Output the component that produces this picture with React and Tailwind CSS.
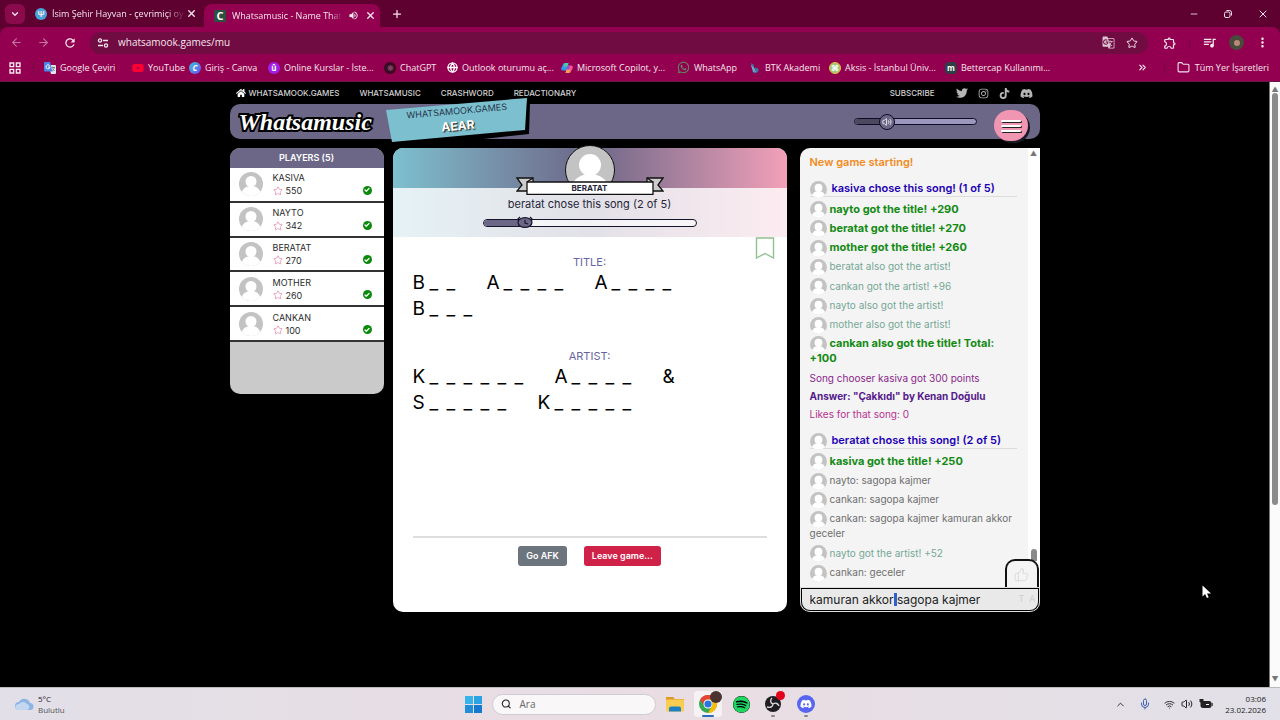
import React, { useState } from "react";
import { FaTwitter, FaInstagram, FaTiktok, FaDiscord, FaHome, FaYoutube, FaWhatsapp, FaSpotify } from "react-icons/fa";
import { MdGTranslate, MdOutlineExtension, MdQueueMusic, MdMoreVert, MdVolumeUp, MdRefresh } from "react-icons/md";
import {
  ArrowLeft,
  ArrowRight,
  Check,
  ChevronDown,
  ChevronUp,
  ChevronsRight,
  Folder,
  Globe,
  Mic,
  Minus,
  Plus,
  Search,
  Star,
  ThumbsUp,
  Volume2,
  Wifi,
  X,
} from "lucide-react";

const bookmarks = [
  { label: "Google Çeviri", width: "w-[88px]", icon: <TranslateIcon /> },
  { label: "YouTube", width: "w-[57px]", icon: <FaYoutube className="size-3 text-[#ff0033]" /> },
  { label: "Giriş - Canva", width: "w-[79px]", icon: <Disc className="bg-linear-to-br from-[#12c4d3] to-[#6a3df0] text-white italic">C</Disc> },
  { label: "Online Kurslar - İste...", width: "w-[116px]", icon: <Disc className="bg-[#a020e8] text-white">û</Disc> },
  { label: "ChatGPT", width: "w-[63px]", icon: <Disc className="bg-[#3a0a22] text-[#7a4460]">❋</Disc> },
  { label: "Outlook oturumu aç...", width: "w-[114px]", icon: <Globe className="size-[11px] rounded-full bg-[#92004f] text-white" strokeWidth={3} /> },
  { label: "Microsoft Copilot, y...", width: "w-[116px]", icon: <CopilotIcon /> },
  { label: "WhatsApp", width: "w-[72px]", icon: <FaWhatsapp className="size-[13px] text-[#5f8f62]" /> },
  { label: "BTK Akademi", width: "w-[80px]", icon: <BtkIcon /> },
  { label: "Aksis - İstanbul Üniv...", width: "w-[116px]", icon: <Disc className="border border-[#e8c33b] bg-[#9dc77a] text-white">⌘</Disc> },
  { label: "Bettercap Kullanımı...", width: "w-[120px]", icon: <Disc className="rounded-sm bg-[#2e4043] text-white">m</Disc> },
];

const players = [
  { name: "KASIVA", score: 550 },
  { name: "NAYTO", score: 342 },
  { name: "BERATAT", score: 270 },
  { name: "MOTHER", score: 260 },
  { name: "CANKAN", score: 100 },
];

const messages = [
  { kind: "start", text: "New game starting!" },
  { kind: "round", text: "kasiva chose this song! (1 of 5)" },
  { kind: "title", text: "nayto got the title! +290" },
  { kind: "title", text: "beratat got the title! +270" },
  { kind: "title", text: "mother got the title! +260" },
  { kind: "artist", text: "beratat also got the artist!" },
  { kind: "artist", text: "cankan got the artist! +96" },
  { kind: "artist", text: "nayto also got the artist!" },
  { kind: "artist", text: "mother also got the artist!" },
  { kind: "title", text: "cankan also got the title! Total: +100" },
  { kind: "points", text: "Song chooser kasiva got 300 points" },
  { kind: "answer", text: 'Answer: "Çakkıdı" by Kenan Doğulu' },
  { kind: "likes", text: "Likes for that song: 0" },
  { kind: "round", text: "beratat chose this song! (2 of 5)" },
  { kind: "title", text: "kasiva got the title! +250" },
  { kind: "chat", text: "nayto: sagopa kajmer" },
  { kind: "chat", text: "cankan: sagopa kajmer" },
  { kind: "chat", text: "cankan: sagopa kajmer kamuran akkor geceler" },
  { kind: "artist", text: "nayto got the artist! +52" },
  { kind: "chat", text: "cankan: geceler" },
];

const messageStyles = {
  start: "text-[11px] leading-[14px] font-semibold text-[#f28a1c]",
  round: "mt-2 border-b border-[#dcdcdc] text-[11px] leading-[15px] font-semibold whitespace-nowrap text-[#1c00b4]",
  title: "text-[11px] leading-[15px] font-bold text-[#138a13]",
  artist: "text-[10px] leading-[15px] text-[#76a796]",
  points: "text-[10px] leading-[14px] text-[#8a1f8a]",
  answer: "text-[10px] leading-[14px] font-bold text-[#551a8b]",
  likes: "text-[10px] leading-[14px] text-[#b8318f]",
  chat: "text-[10px] leading-[15px] text-[#6e6e6e]",
};

const withAvatar = ["round", "title", "artist", "chat"];

function Disc({ className, children }) {
  return (
    <span className={`flex size-3 shrink-0 items-center justify-center rounded-full text-[8px] leading-none font-bold ${className}`}>
      {children}
    </span>
  );
}

function TranslateIcon() {
  return (
    <svg viewBox="0 0 24 24" className="size-3 shrink-0">
      <path d="M9 6h13a2 2 0 0 1 2 2v14a2 2 0 0 1-2 2h-8z" fill="#e3e6ea" />
      <path d="M2 0h10l5 19H2a2 2 0 0 1-2-2V2a2 2 0 0 1 2-2z" fill="#4a86e8" />
      <path d="M11 7a4 4 0 1 0 1 3H8" fill="none" stroke="#fff" strokeWidth="2" />
      <path d="M15 11h7M18 9v2M21 11c-1 4-3 5-5 7M17 13l4 5" fill="none" stroke="#5f6b78" strokeWidth="1.5" />
    </svg>
  );
}

function CopilotIcon() {
  return (
    <svg viewBox="0 0 24 24" className="size-3 shrink-0">
      <path d="M8 2h7l-4 15H4c-4 0-4-3-3-6l3-6c1-2 2-3 4-3z" fill="#2c9be8" />
      <path d="M8 2h7l-2 7H5z" fill="#4ad0a0" />
      <path d="M16 22H9l4-15h7c4 0 4 3 3 6l-3 6c-1 2-2 3-4 3z" fill="#f0558f" />
      <path d="M16 22H9l2-7h8z" fill="#f8a54a" />
      <path d="M13 7h5l-2 8h-5z" fill="#a04bd8" />
    </svg>
  );
}

function BtkIcon() {
  return (
    <svg viewBox="0 0 24 24" className="size-3 shrink-0">
      <path d="M4 2l6 4v6c6-2 11 1 9 6-2 5-10 6-12 1z" fill="#3d6f9f" />
      <path d="M8 10l5 10M5 7l5 13" stroke="#9fc4de" strokeWidth="1.5" />
    </svg>
  );
}

function Avatar({ className }) {
  return (
    <svg viewBox="0 0 24 24" className={`rounded-full bg-[#c3c3c3] ${className}`}>
      <circle cx="12" cy="9.5" r="5.5" fill="#fff" />
      <path d="M2 24c0-6 4-10 10-10s10 4 10 10z" fill="#fff" />
    </svg>
  );
}

function Browser() {
  return (
    <header className="shrink-0 bg-[#5e0030] font-['Open_Sans',sans-serif] text-[9px] text-[#f5e6ee]">
      <div className="flex h-[27px] items-center">
        <button aria-label="Search tabs" className="ml-[5px] flex size-5 items-center justify-center rounded-md bg-[#8a0a4c]">
          <ChevronDown className="size-[10px]" strokeWidth={3} />
        </button>
        <div className="ml-[10px] flex w-[169px] items-center">
          <span className="flex size-3 shrink-0 items-center justify-center rounded-full bg-[#4aa3d8] text-[8px] font-bold">Ψ</span>
          <span className="ml-[5px] w-[134px] shrink-0 whitespace-nowrap mask-r-from-85%">İsim Şehir Hayvan - çevrimiçi oy</span>
          <button aria-label="Close tab" className="shrink-0">
            <X className="size-[11px]" strokeWidth={3} />
          </button>
        </div>
        <div className="mt-1 flex h-[23px] w-[176px] items-center gap-[6px] rounded-t-lg bg-[#92004f] px-[10px]">
          <span className="flex size-3 shrink-0 items-center justify-center bg-[#2f4f43] text-[11px] leading-none font-bold text-white">C</span>
          <span className="flex-1 whitespace-nowrap mask-r-from-90%">Whatsamusic - Name That</span>
          <MdVolumeUp className="size-[11px] shrink-0" />
          <button aria-label="Close tab">
            <X className="size-[11px]" strokeWidth={3} />
          </button>
        </div>
        <button aria-label="New tab" className="ml-[11px]">
          <Plus className="size-3" strokeWidth={2.5} />
        </button>
        <div className="mr-[11px] ml-auto flex items-center gap-6">
          <button aria-label="Minimize">
            <Minus className="size-[10px]" />
          </button>
          <button aria-label="Restore">
            <svg viewBox="0 0 10 10" className="size-[10px]" fill="none" stroke="currentColor">
              <rect x="1.5" y="3" width="5.5" height="5.5" rx="1.5" />
              <path d="M3.5 1.5h3a2 2 0 0 1 2 2v3" />
            </svg>
          </button>
          <button aria-label="Close">
            <X className="size-3" strokeWidth={2} />
          </button>
        </div>
      </div>

      <div className="h-[55px] rounded-t-lg border-b border-[#6b1745] bg-[#92004f]">
        <div className="flex h-[31px] items-center px-[10px]">
          <ArrowLeft className="size-[13px] text-[#c4749f]" />
          <ArrowRight className="ml-[14px] size-[13px] text-[#c4749f]" />
          <MdRefresh className="ml-[13px] size-[14px]" />
          <div className="ml-[13px] flex h-[22px] flex-1 items-center rounded-full bg-[#700c42] pr-[10px] pl-[6px]">
            <svg viewBox="0 0 14 14" className="size-[14px] rounded-full" fill="none" stroke="currentColor" strokeWidth="1.3">
              <circle cx="4" cy="4.5" r="1.6" />
              <path d="M7 4.5h5M2 9.5h5" />
              <circle cx="10" cy="9.5" r="1.6" />
            </svg>
            <input aria-label="Address" readOnly value="whatsamook.games/mu" className="ml-2 min-w-0 flex-1 bg-transparent text-[10px] outline-none" />
            <MdGTranslate className="size-[13px] text-[#dcc3d0]" />
            <Star className="ml-[11px] size-3" />
          </div>
          <MdOutlineExtension className="ml-[15px] size-[14px]" />
          <span className="mx-3 h-3 w-px bg-[#700c42]" />
          <MdQueueMusic className="size-[15px]" />
          <span className="ml-3 flex size-[15px] items-center justify-center overflow-hidden rounded-full bg-[#4a4a3c]">
            <span className="size-[6px] rounded-full bg-[#b98a76]" />
          </span>
          <MdMoreVert className="ml-[11px] size-[15px]" />
        </div>
        <nav className="flex h-[19px] items-center pr-[11px] pl-[9px] text-[9px]">
          <svg viewBox="0 0 12 12" className="size-3" fill="none" stroke="currentColor" strokeWidth="1.4">
            <path d="M1 1h3.6v3.6H1zM7.4 1H11v3.6H7.4zM1 7.4h3.6V11H1zM7.4 7.4H11V11H7.4z" />
          </svg>
          <span className="mr-[10px] ml-3 h-3 w-px bg-[#700c42]" />
          {bookmarks.map((b) => (
            <a key={b.label} href="#" className={`flex shrink-0 items-center gap-1 whitespace-nowrap ${b.width}`}>
              {b.icon}
              <span>{b.label}</span>
            </a>
          ))}
          <ChevronsRight className="ml-auto size-[11px]" strokeWidth={2.5} />
          <span className="ml-4 mr-3 h-3 w-px bg-[#700c42]" />
          <a href="#" className="flex items-center gap-[5px]">
            <Folder className="size-[13px]" />
            Tüm Yer İşaretleri
          </a>
        </nav>
      </div>
    </header>
  );
}

function TopNav() {
  return (
    <nav className="flex h-[22px] items-center text-[8px] font-medium text-[#d2d2d2]">
      <a href="#" className="ml-[6px] flex items-center gap-[3px]">
        <FaHome className="size-[10px] text-white" />
        WHATSAMOOK.GAMES
      </a>
      <a href="#" className="ml-5">WHATSAMUSIC</a>
      <a href="#" className="ml-5">CRASHWORD</a>
      <a href="#" className="ml-5">REDACTIONARY</a>
      <a href="#" className="ml-auto">SUBSCRIBE</a>
      <div className="mr-[7px] ml-[21px] flex items-center gap-[10px] text-[#b5b5b5]">
        <a href="#" aria-label="Twitter"><FaTwitter className="size-3" /></a>
        <a href="#" aria-label="Instagram"><FaInstagram className="size-[11px]" /></a>
        <a href="#" aria-label="TikTok"><FaTiktok className="size-[11px]" /></a>
        <a href="#" aria-label="Discord"><FaDiscord className="size-[13px]" /></a>
      </div>
    </nav>
  );
}

function GameHeader() {
  const [volume, setVolume] = useState(27);

  return (
    <div className="relative flex h-[35px] items-center rounded-[10px] bg-[#6c6787] px-[9px]">
      <h1 className="font-[cursive] text-[24px] leading-none font-bold text-white italic [paint-order:stroke_fill] [-webkit-text-stroke:4px_#000]">
        Whatsamusic
      </h1>

      <div className="absolute -top-[7px] left-[156px] h-[46px] w-[146px]">
        <svg viewBox="0 0 146 46" className="absolute inset-0">
          <path d="M10 14L144 6L143 37L62 46L10 40z" fill="#000" />
          <path d="M0 13L141 1L139 33L6 45z" fill="#7cc0cf" />
        </svg>
        <div className="relative flex -rotate-5 flex-col items-center gap-1 pt-[9px] pr-1">
          <span className="text-[9px] leading-[10px] text-[#26334a]">WHATSAMOOK.GAMES</span>
          <span className="text-[12px] leading-[12px] font-bold text-white [text-shadow:1px_1px_1px_#222]">AEAR</span>
        </div>
      </div>

      <div className="relative mr-[17px] ml-auto flex h-4 w-[123px] items-center">
        <div className="h-[7px] w-full overflow-hidden rounded-full border-[1.5px] border-[#0d0c24] bg-[#9b97bd]">
          <div className="h-full bg-[#4c4860]" style={{ width: `${volume}%` }} />
        </div>
        <span
          className="absolute flex size-4 -translate-x-1/2 items-center justify-center rounded-full border-[1.5px] border-[#0d0c24] bg-[#6c6787] text-white"
          style={{ left: `${volume}%` }}
        >
          <Volume2 className="size-[10px]" />
        </span>
        <input
          type="range"
          aria-label="Volume"
          value={volume}
          onChange={(e) => setVolume(Number(e.target.value))}
          className="absolute inset-0 w-full opacity-0"
        />
      </div>
      <button
        aria-label="Menu"
        className="relative top-1 mr-[3px] flex h-[31px] w-[34px] flex-col items-center justify-center gap-[3px] rounded-full bg-[#f095b2] shadow-[2px_2px_0_#1a1a24]"
      >
        <span className="h-[2px] w-5 rounded-full bg-white shadow-[1px_1px_0_#222]" />
        <span className="h-[2px] w-5 rounded-full bg-white shadow-[1px_1px_0_#222]" />
        <span className="h-[2px] w-5 rounded-full bg-white shadow-[1px_1px_0_#222]" />
      </button>
    </div>
  );
}

function Players() {
  return (
    <section className="h-[246px] overflow-hidden rounded-[10px] bg-[#cacaca]">
      <h2 className="flex h-5 items-center justify-center bg-[#6c6787] text-[9px] font-semibold text-white">PLAYERS (5)</h2>
      <ul className="grid h-[174px] auto-rows-fr">
        {players.map((p) => (
          <li key={p.name} className="flex items-center border-b-2 border-[#333] bg-white pr-3 pl-[9px]">
            <Avatar className="size-6" />
            <div className="ml-[10px] text-[9px] leading-[13px] text-[#2b2b2b]">
              <div>{p.name}</div>
              <div className="flex items-center gap-[3px]">
                <Star className="size-[10px] text-[#e0709a]" strokeWidth={1.5} />
                {p.score}
              </div>
            </div>
            <span className="mt-3 ml-auto flex size-[9px] items-center justify-center rounded-full bg-[#0a8a0a] text-white">
              <Check className="size-[6px]" strokeWidth={5} />
            </span>
          </li>
        ))}
      </ul>
    </section>
  );
}

function Blanks({ words }) {
  return (
    <div className="flex flex-wrap gap-x-[23px] text-[19px] leading-[26px] text-black">
      {words.map((word, i) => (
        <span key={i} className="flex">
          {word.split("").map((ch, j) => (
            <span key={j} className="w-[17px]">{ch}</span>
          ))}
        </span>
      ))}
    </div>
  );
}

function Ribbon() {
  return (
    <div className="relative h-[18px] w-[148px]">
      <svg viewBox="0 0 148 18" className="absolute inset-0" stroke="#111" strokeWidth="1.3">
        <path d="M1 1h16v13H1l5-6z" fill="#ccc" />
        <path d="M147 1h-16v13h16l-5-6z" fill="#ccc" />
        <path d="M11 5l6-4M137 5l-6-4" />
        <path d="M11 5h126v12.3H11z" fill="#fff" />
      </svg>
      <span className="absolute inset-x-0 top-[5px] text-center text-[8px] leading-[12px] font-bold">BERATAT</span>
    </div>
  );
}

function Board() {
  return (
    <section className="flex flex-col rounded-[10px] bg-white">
      <div className="rounded-t-[10px] bg-linear-to-r from-[#7cc0cf] via-[#6c6787] to-[#f3a0b8]">
        <div className="h-10" />
        <div className="h-[49px] bg-white/80" />
      </div>
      <div className="-mt-[92px] flex h-[92px] flex-col items-center text-[#262638]">
        <Avatar className="size-[50px] shrink-0 border-[1.5px] border-[#111]" />
        <div className="-mt-[18px]">
          <Ribbon />
        </div>
        <p className="mt-[2px] text-[11px] leading-[14px]">beratat chose this song (2 of 5)</p>
        <div className="relative mt-2 h-2 w-[214px] shrink-0 rounded-full border-[1.5px] border-[#15152c] bg-white/60">
          <div className="h-full w-[41px] rounded-l-full bg-[#6c6787]" />
          <svg viewBox="0 0 18 12" className="absolute -top-[4px] left-8 h-3 w-[18px]" stroke="#15152c" strokeWidth="1.2" fill="#6c6787">
            <ellipse cx="9" cy="6.5" rx="7" ry="4.8" />
            <path d="M1 4l3-3M17 4l-3-3M9 4v3l3 1" fill="none" />
          </svg>
        </div>
      </div>

      <div className="flex flex-1 flex-col px-5">
        <button aria-label="Bookmark this song" className="-mr-2 self-end">
          <svg viewBox="0 0 20 22" className="h-[22px] w-5" fill="none" stroke="#8fc08f" strokeWidth="1.4">
            <path d="M1.5 1h17v20L10 16.500l-8.500 4.500z" />
          </svg>
        </button>
        <h3 className="-mt-[5px] text-center text-[11px] leading-4 text-[#6863a0]">TITLE:</h3>
        <Blanks words={["B__", "A____", "A____", "B___"]} />
        <h3 className="mt-[26px] text-center text-[11px] leading-4 text-[#6863a0]">ARTIST:</h3>
        <Blanks words={["K______", "A____", "&", "S_____", "K_____"]} />
        <hr className="mt-auto border-t-2 border-[#dedede]" />
        <div className="mt-2 mb-[46px] flex justify-center gap-[17px] text-[9px] font-semibold text-white">
          <button className="h-5 rounded-[3px] bg-[#6c757d] px-2">Go AFK</button>
          <button className="h-5 rounded-[3px] bg-[#d02148] px-2">Leave game...</button>
        </div>
      </div>
    </section>
  );
}

function Chat() {
  const [draft, setDraft] = useState("kamuran akkor sagopa kajmer");

  return (
    <section className="relative flex flex-col overflow-hidden rounded-[10px] rounded-tr-none bg-[#f4f4f4]">
      <div className="flex flex-1">
        <ul className="flex flex-1 flex-col justify-between pt-[7px] pr-[11px] pb-[7px] pl-[10px]">
          {messages.map((m, i) => (
            <li key={i} className={messageStyles[m.kind]}>
              {withAvatar.includes(m.kind) && (
                <Avatar className={`-my-1 inline-block size-[17px] align-middle ${m.kind === "round" ? "mr-[5px]" : "mr-[3px]"}`} />
              )}
              {m.text}
            </li>
          ))}
        </ul>
        <div className="flex w-3 flex-col items-center bg-white">
          <span className="mt-[2px] text-[7px] leading-none text-[#777]">▲</span>
          <span className="mt-auto mb-[26px] h-3 w-[6px] rounded-t-full bg-[#8a8a8a]" />
        </div>
      </div>

      <button
        aria-label="Like this song"
        className="absolute right-[1px] bottom-[25px] flex h-7 w-[34px] items-center justify-center rounded-t-[10px] border-2 border-b-0 border-[#111] bg-[#f4f4f4] text-[#d6d6d6]"
      >
        <ThumbsUp className="size-[15px]" strokeWidth={1.3} />
      </button>

      <form onSubmit={(e) => e.preventDefault()} className="relative h-[25px] rounded-b-[10px] border border-[#ddd] bg-black p-px">
        <input
          aria-label="Your guess"
          value={draft}
          onChange={(e) => setDraft(e.target.value)}
          className="block h-full w-full rounded-b-[8px] bg-[#e9e9e9] pl-2 text-[12px] text-[#222] outline-none"
        />
        <span className="pointer-events-none absolute top-[5px] left-[93px] h-[13px] w-[3px] bg-[#2f5fd0]" />
        <span className="pointer-events-none absolute top-1 right-[3px] text-[9px] text-[#cfcfcf]">T&nbsp; A</span>
      </form>
    </section>
  );
}

function Taskbar() {
  return (
    <footer className="grid h-[33px] shrink-0 grid-cols-[1fr_auto_1fr] items-center border-t border-[#bdb8be] bg-[#e3dfe6] bg-linear-to-r from-[#e2dfe8] via-[#e9dde2] to-[#e2e0e8] font-['Open_Sans',sans-serif] text-[8px] text-[#222]">
      <div className="flex items-center gap-1 pl-[14px]">
        <svg viewBox="0 0 20 14" className="h-[14px] w-5">
          <path d="M5 13a4 4 0 0 1 0-8 6 6 0 0 1 11 1 3.500 3.500 0 0 1 0 7z" fill="#8eb4e4" />
          <path d="M4 13a3 3 0 0 1 1-6 5 5 0 0 1 8 0c3 1 3 5 0 6z" fill="#c3d7f0" />
        </svg>
        <div className="leading-[11px]">
          <div>5°C</div>
          <div className="text-[#555]">Bulutlu</div>
        </div>
      </div>

      <div className="flex items-center">
        <button aria-label="Start" className="grid size-[17px] grid-cols-2 gap-px">
          <span className="bg-[#35b3ea]" />
          <span className="bg-[#2aa2e4]" />
          <span className="bg-[#1f8fdc]" />
          <span className="bg-[#1479d0]" />
        </button>
        <label className="ml-[10px] flex h-[21px] w-[164px] items-center gap-2 rounded-full border border-[#cfcbd2] bg-[#faf7f9] px-2">
          <Search className="size-3" strokeWidth={2.5} />
          <input placeholder="Ara" aria-label="Ara" className="w-full bg-transparent text-[10px] outline-none placeholder:text-[#666]" />
        </label>
        <svg viewBox="0 0 20 18" className="ml-[9px] h-[18px] w-5">
          <path d="M1 2h7l2 2h9v5H1z" fill="#dc9b28" />
          <rect x="1" y="4.500" width="18" height="12" rx="1" fill="#f9cd52" />
          <path d="M4 16.500v-3a2 2 0 0 1 2-2h8a2 2 0 0 1 2 2v3z" fill="#1d7fc4" />
        </svg>
        <div className="relative ml-[9px] flex h-[26px] w-[28px] items-center justify-center rounded-[3px] bg-white/60">
          <svg viewBox="0 0 20 20" className="size-[18px]">
            <circle cx="10" cy="10" r="10" fill="#34a853" />
            <path d="M10 0a10 10 0 0 1 8.700 5H10a5 5 0 0 0-4.300 7.500L1.300 5A10 10 0 0 1 10 0z" fill="#ea4335" />
            <path d="M18.700 5A10 10 0 0 1 10 20l4.300-7.500A5 5 0 0 0 14 7L10 5z" fill="#fbbc04" />
            <circle cx="10" cy="10" r="5" fill="#fff" />
            <circle cx="10" cy="10" r="4" fill="#2f73e0" />
          </svg>
          <span className="absolute top-0 right-0 size-3 rounded-full bg-[#4b342f]" />
          <span className="absolute bottom-0 h-[2px] w-3 rounded-full bg-[#2a6cc0]" />
        </div>
        <FaSpotify className="ml-[11px] size-[17px] rounded-full bg-black text-[#1ed760]" />
        <div className="relative ml-[15px] flex h-[26px] w-5 items-center">
          <svg viewBox="0 0 16 16" className="size-4">
            <circle cx="8" cy="8" r="8" fill="#1f1c22" />
            <path d="M8 8c-3-1-3-4-1-6M8 8c3-2 5 0 6 2M8 8c0 3-3 4-6 3" fill="none" stroke="#d8d8d8" strokeWidth="1.400" />
          </svg>
          <span className="absolute top-0 right-0 size-[9px] rounded-full bg-[#e2001a]" />
          <span className="absolute bottom-0 left-[6px] h-[2px] w-1 rounded-full bg-[#888]" />
        </div>
        <div className="relative ml-3 flex h-[26px] w-[18px] items-center">
          <span className="flex size-[18px] items-center justify-center rounded-full bg-[#5865f2]">
            <FaDiscord className="size-3 text-white" />
          </span>
          <span className="absolute bottom-0 left-[7px] h-[2px] w-1 rounded-full bg-[#888]" />
        </div>
      </div>

      <div className="flex items-center justify-end pr-[14px]">
        <ChevronUp className="size-[11px]" />
        <Mic className="ml-[13px] size-3 text-[#3f62b0]" />
        <Wifi className="ml-[13px] size-[11px]" />
        <Volume2 className="ml-[6px] size-3" />
        <svg viewBox="0 0 14 10" className="ml-[6px] h-[10px] w-[14px]">
          <rect x="2" y="2.500" width="10" height="6" rx="1.500" fill="#222" stroke="#222" />
          <path d="M13.200 4v3" stroke="#222" />
          <path d="M1 0v3h3V0" stroke="#222" fill="#222" />
          <path d="M7 5.500h3" stroke="#fff" />
        </svg>
        <div className="ml-3 text-right leading-[11px]">
          <div>03:06</div>
          <div>23.02.2026</div>
        </div>
      </div>
    </footer>
  );
}

export default function App() {
  return (
    <div className="flex min-h-screen flex-col bg-black font-['Inter',sans-serif]">
      <Browser />
      <div className="flex flex-1">
        <main className="flex-1">
          <div className="mx-auto max-w-[810px]">
            <TopNav />
            <GameHeader />
            <div className="mt-[9px] grid min-h-[464px] grid-cols-[163fr_407fr_240fr]">
              <div className="pr-[9px]">
                <Players />
              </div>
              <div className="grid pr-[13px]">
                <Board />
              </div>
              <Chat />
            </div>
          </div>
        </main>
        <div className="flex w-[11px] flex-col items-center justify-between border-l border-[#777] bg-[#fbfbfb] py-1 text-[7px] leading-none text-[#777]">
          <span>▲</span>
          <span className="mb-auto h-[412px] w-[6px] rounded-full bg-[#8b8b8b]" />
          <span>▼</span>
        </div>
      </div>
      <Taskbar />

      {/* mouse pointer */}
      <svg viewBox="0 0 10 14" className="pointer-events-none absolute top-[585px] left-[1202px] h-[14px] w-[10px]">
        <path d="M.5.5v11l2.600-2.400 1.800 4 1.800-.8-1.700-3.900H9z" fill="#fff" />
      </svg>
    </div>
  );
}
